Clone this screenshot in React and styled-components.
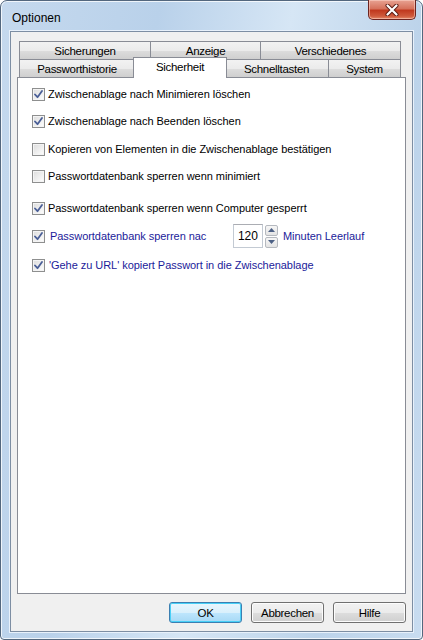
import styled, { createGlobalStyle } from "styled-components";

const Global = createGlobalStyle`
    html, body {
        margin: 0;
        padding: 0;
        background: #ffffff;
    }
    body {
        font-family: "Liberation Sans", Arial, sans-serif;
        font-size: 11px;
    }
`;

const Window = styled.div`
    width: 423px;
    height: 640px;
    box-sizing: border-box;
    border: 1px solid #53677e;
    border-radius: 7px 7px 4px 4px;
    background: linear-gradient(100deg, #c5d9ee 0%, #b9d1ea 30%, #d6e6f5 55%, #bcd3ea 80%, #c8dcf0 100%);
    display: flex;
    flex-direction: column;
    padding: 0 9px 7px 9px;
    box-shadow: inset 0 0 0 1px rgba(255, 255, 255, 0.75);
`;

const TitleBar = styled.div`
    height: 30px;
    display: flex;
    align-items: flex-start;
    justify-content: space-between;
    flex-shrink: 0;
`;

const Title = styled.div`
    font-family: "Liberation Sans", Arial, sans-serif;
    font-size: 12px;
    color: #000;
    margin-top: 10px;
    margin-left: 2px;
`;

const CloseButton = styled.div`
    width: 48px;
    height: 20px;
    margin-right: -3px;
    margin-top: -1px;
    box-sizing: border-box;
    border: 1px solid #6c2420;
    border-top: none;
    border-radius: 0 0 5px 5px;
    background: linear-gradient(180deg, #e8a393 0%, #d6725c 45%, #c0391f 55%, #cf5a3c 85%, #e48a6a 100%);
    display: flex;
    align-items: center;
    justify-content: center;
    box-shadow: inset 0 0 0 1px rgba(255, 220, 210, 0.5);
`;

const Client = styled.div`
    flex: 1;
    background: #f0f0f0;
    border: 1px solid #7d8ea3;
    display: flex;
    flex-direction: column;
    padding: 9px 6px 8px 6px;
    box-shadow: 0 0 0 1px #e8f1fb;
`;

const TabRows = styled.div`
    display: flex;
    flex-direction: column;
    padding: 0 2px;
    position: relative;
    z-index: 1;
`;

const TabRow = styled.div`
    display: flex;
    height: 18px;
`;

const Tab = styled.div`
    width: ${p => p.w}px;
    box-sizing: border-box;
    border: 1px solid #898c95;
    border-left: ${p => (p.first ? "1px solid #898c95" : "none")};
    border-bottom: none;
    background: linear-gradient(180deg, #f2f2f2 0%, #ebebeb 50%, #dddddd 51%, #cfcfcf 100%);
    display: flex;
    align-items: center;
    justify-content: center;
    color: #000;
    font-size: 11.5px;
    letter-spacing: -0.3px;
    padding-top: 1px;
`;

const ActiveTab = styled.div`
    width: ${p => p.w}px;
    height: 21px;
    margin: -2px -2px -1px -2px;
    box-sizing: border-box;
    border: 1px solid #898c95;
    border-bottom: none;
    background: #ffffff;
    display: flex;
    align-items: flex-start;
    justify-content: center;
    padding-top: 3px;
    font-size: 11.5px;
    letter-spacing: -0.3px;
    position: relative;
    z-index: 2;
`;

const Panel = styled.div`
    flex: 1;
    background: #ffffff;
    border: 1px solid #898c95;
    padding: 8px 14px;
    display: flex;
    flex-direction: column;
`;

const Option = styled.div`
    display: flex;
    align-items: center;
    height: 16px;
    margin-top: ${p => p.mt}px;
    color: ${p => (p.blue ? "#1b1b9a" : "#000")};
    font-size: 11px;
    letter-spacing: -0.05px;
`;

const Box = styled.span`
    width: 13px;
    height: 13px;
    box-sizing: border-box;
    border: 1px solid #8e8f8f;
    background: linear-gradient(135deg, #dcdcdc 0%, #f4f4f4 70%, #ffffff 100%);
    box-shadow: inset 0 0 0 1px #f4f4f4;
    display: inline-flex;
    align-items: center;
    justify-content: center;
    margin-right: 3px;
    flex-shrink: 0;
`;

const Label = styled.span`
    margin-left: ${p => p.ml || 0}px;
    white-space: nowrap;
`;

const SpinRow = styled.div`
    display: flex;
    align-items: center;
    height: 24px;
    margin-top: ${p => p.mt}px;
    color: #1b1b9a;
    font-size: 11px;
    letter-spacing: -0.05px;
`;

const LabelCell = styled.span`
    width: 183px;
    margin-left: 2px;
    white-space: nowrap;
`;

const Input = styled.div`
    width: 30px;
    height: 24px;
    box-sizing: border-box;
    border: 1px solid #c3cad3;
    border-top-color: #abadb3;
    background: #fff;
    color: #000;
    font-size: 12px;
    padding: 4px 0 0 4px;
`;

const Spinner = styled.div`
    display: flex;
    flex-direction: column;
    gap: 1px;
    margin-left: 2px;
    margin-right: 5px;
`;

const SpinButton = styled.div`
    width: 13px;
    height: 11px;
    box-sizing: border-box;
    border: 1px solid #b5b9bf;
    border-radius: 2px;
    background: linear-gradient(180deg, #f6f6f6 0%, #e4e4e4 100%);
    display: flex;
    align-items: center;
    justify-content: center;
`;

const ButtonBar = styled.div`
    display: flex;
    justify-content: flex-end;
    gap: 9px;
    padding: 8px 0 0 0;
`;

const Button = styled.div`
    width: 73px;
    height: 21px;
    box-sizing: border-box;
    border: 1px solid ${p => (p.focus ? "#3c7fb1" : "#707070")};
    border-radius: 3px;
    background: ${p =>
        p.focus
            ? "linear-gradient(180deg, #eaf6fd 0%, #d9f0fc 50%, #bee6fd 51%, #a7d9f5 100%)"
            : "linear-gradient(180deg, #f2f2f2 0%, #ebebeb 50%, #dddddd 51%, #cfcfcf 100%)"};
    box-shadow: inset 0 0 0 1px ${p => (p.focus ? "#48d0f7" : "#fcfcfc")};
    display: flex;
    align-items: center;
    justify-content: center;
    font-size: 11.5px;
    letter-spacing: -0.3px;
    color: #000;
`;

const Check = () => (
    <svg width="9" height="9" viewBox="0 0 9 9">
        <path d="M1 4.5 L3.5 7.2 L8 1" fill="none" stroke="#4a5f97" strokeWidth="1.8" strokeLinecap="round" strokeLinejoin="round" />
    </svg>
);

const Checkbox = ({ checked }) => <Box>{checked && <Check />}</Box>;

const options = [
    { text: "Zwischenablage nach Minimieren löschen", checked: true, mt: 0 },
    { text: "Zwischenablage nach Beenden löschen", checked: true, mt: 11 },
    { text: "Kopieren von Elementen in die Zwischenablage bestätigen", checked: false, mt: 12 },
    { text: "Passwortdatenbank sperren wenn minimiert", checked: false, mt: 11 },
    { text: "Passwortdatenbank sperren wenn Computer gesperrt", checked: true, mt: 16 },
];

const App = () => {
    return (
        <>
            <Global />
            <Window>
                <TitleBar>
                    <Title>Optionen</Title>
                    <CloseButton>
                        <svg width="14" height="12" viewBox="0 0 14 12">
                            <path d="M2.5 1.5 L11.5 10.5 M11.5 1.5 L2.5 10.5" stroke="#5a1a12" strokeWidth="4" strokeLinecap="round" />
                            <path d="M2.5 1.5 L11.5 10.5 M11.5 1.5 L2.5 10.5" stroke="#ffffff" strokeWidth="2.2" strokeLinecap="round" />
                        </svg>
                    </CloseButton>
                </TitleBar>
                <Client>
                    <TabRows>
                        <TabRow>
                            <Tab w={132} first>Sicherungen</Tab>
                            <Tab w={110}>Anzeige</Tab>
                            <Tab w={140}>Verschiedenes</Tab>
                        </TabRow>
                        <TabRow>
                            <Tab w={116} first>Passworthistorie</Tab>
                            <ActiveTab w={94}>Sicherheit</ActiveTab>
                            <Tab w={104}>Schnelltasten</Tab>
                            <Tab w={72}>System</Tab>
                        </TabRow>
                    </TabRows>
                    <Panel>
                        {options.map(o => (
                            <Option key={o.text} mt={o.mt}>
                                <Checkbox checked={o.checked} />
                                <Label>{o.text}</Label>
                            </Option>
                        ))}
                        <SpinRow mt={8}>
                            <Checkbox checked />
                            <LabelCell>Passwortdatenbank sperren nac</LabelCell>
                            <Input>120</Input>
                            <Spinner>
                                <SpinButton>
                                    <svg width="7" height="4" viewBox="0 0 7 4"><path d="M0 4 L3.5 0 L7 4 Z" fill="#4d6185" /></svg>
                                </SpinButton>
                                <SpinButton>
                                    <svg width="7" height="4" viewBox="0 0 7 4"><path d="M0 0 L3.5 4 L7 0 Z" fill="#4d6185" /></svg>
                                </SpinButton>
                            </Spinner>
                            <Label>Minuten Leerlauf</Label>
                        </SpinRow>
                        <Option blue mt={9}>
                            <Checkbox checked />
                            <Label ml={1}>'Gehe zu URL' kopiert Passwort in die Zwischenablage</Label>
                        </Option>
                    </Panel>
                    <ButtonBar>
                        <Button focus>OK</Button>
                        <Button>Abbrechen</Button>
                        <Button>Hilfe</Button>
                    </ButtonBar>
                </Client>
            </Window>
        </>
    );
};

export default App;
